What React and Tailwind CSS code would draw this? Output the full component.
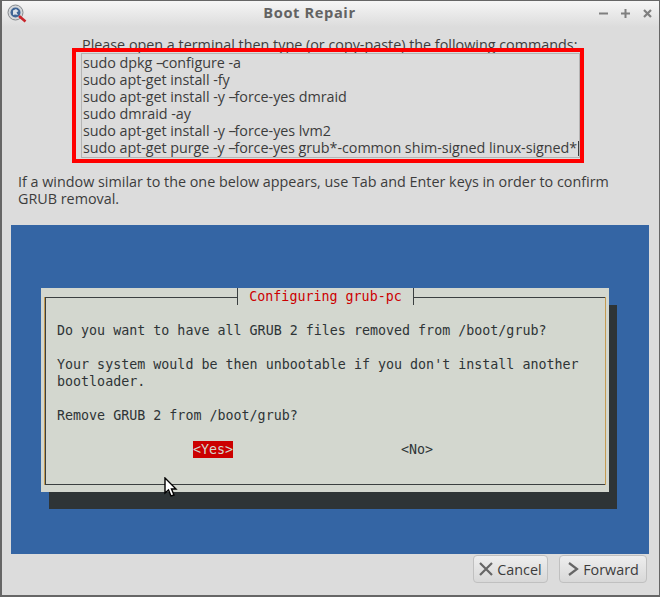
import React from "react";

const sans = "font-['Open_Sans','Noto_Sans',sans-serif]";
const mono = "font-['DejaVu_Sans_Mono',monospace]";

const commands = [
  ["sudo dpkg ", "--", "configure -a"],
  ["sudo apt-get install -fy"],
  ["sudo apt-get install -y ", "--", "force-yes dmraid"],
  ["sudo dmraid -ay"],
  ["sudo apt-get install -y ", "--", "force-yes lvm2"],
  ["sudo apt-get purge -y ", "--", "force-yes grub*-common shim-signed linux-signed*"],
];

function TitleBar() {
  return (
    <div className="h-[26px] shrink-0 flex items-center pl-[5px] pr-[7px] bg-gradient-to-b from-[#f6f6f6] to-[#dcdcdc]">
      <svg width="21" height="21" viewBox="0 0 21 21" className="shrink-0">
        <circle cx="8.5" cy="8.5" r="7.5" fill="#d4d7da" stroke="#85898d" strokeWidth="1" />
        <circle cx="8.5" cy="8.5" r="5" fill="#3f6596" />
        <path d="M6 6.5 L9 5 L11.5 7 L9.5 8.5 L11 11 L8 10.5 L6 11 Z" fill="#d9e0e8" />
        <path d="M12 12 L18.5 17.5" stroke="#c9252b" strokeWidth="2.6" />
      </svg>
      <div className={`flex-1 pr-[8px] pb-[4px] text-center text-[14.67px] font-bold text-[#636363] tracking-[0.6px] ${sans}`}>Boot Repair</div>
      <div className="flex items-center gap-[13px] pb-[2px] text-[#7f7f7f]">
        <svg width="9" height="9" viewBox="0 0 9 9"><path d="M0 4.5H9" stroke="currentColor" strokeWidth="2" /></svg>
        <svg width="9" height="9" viewBox="0 0 9 9"><path d="M0 4.5H9M4.5 0V9" stroke="currentColor" strokeWidth="2" /></svg>
        <svg width="9" height="9" viewBox="0 0 9 9"><path d="M1 1L8 8M8 1L1 8" stroke="currentColor" strokeWidth="2.2" /></svg>
      </div>
    </div>
  );
}

function GrubDialog() {
  return (
    <div className={`relative ml-[30px] mt-[63px] w-[568px] h-[204px] bg-[#d3d7cf] shadow-[8px_17px_0_0_#2e3436] text-[13.33px] leading-[17px] text-[#2e3436] ${mono}`}>
      <div className="absolute left-[3px] right-[3px] top-[9px] bottom-[7px] border-l border-r border-l-[#c49a50] border-r-[#c49a50]">
        <div className="h-full border-t border-l border-b border-t-[#3a3f40] border-b-[#3a3f40] border-l-[#3a3f40]" />
      </div>
      <div className="absolute left-[196px] top-0 h-[17px] w-[177px] bg-[#d3d7cf] border-l border-r border-[#3a3f40] text-center text-[#cc0000]">
        Configuring grub-pc
      </div>
      <div className="relative pt-[34px] pl-[16px] whitespace-pre">
        <div>Do you want to have all GRUB 2 files removed from /boot/grub?</div>
        <div className="mt-[17px]">Your system would be then unbootable if you don't install another</div>
        <div>bootloader.</div>
        <div className="mt-[17px]">Remove GRUB 2 from /boot/grub?</div>
        <div className="mt-[17px] flex">
          <span className="ml-[136px] w-[40px] bg-[#cc0000] text-[#d3d7cf]">&lt;Yes&gt;</span>
          <span className="ml-[168px]">&lt;No&gt;</span>
        </div>
      </div>
    </div>
  );
}

function Btn({ width, icon, label }) {
  return (
    <button className={`${width} h-[28px] flex items-center justify-center gap-[4px] rounded-[4px] border border-[#c0c0c0] bg-gradient-to-b from-[#eeeeee] to-[#d8d8d8] text-[14.35px] text-[#3c3c3c] ${sans}`}>
      {icon}
      {label}
    </button>
  );
}

export default function App() {
  return (
    <div className="relative w-[660px] h-[597px] overflow-hidden flex flex-col bg-[#dcdcdc] border-l-2 border-r border-t border-b-2 border-[#666666] text-[#3c3c3c]">
      <TitleBar />
      <div className={`flex-1 flex flex-col text-[14.35px] leading-[17px] ${sans}`}>
        <div className="pl-[80px] pt-[9px] h-[17px] box-content whitespace-nowrap">Please open a terminal then type (or copy-paste) the following commands:</div>
        <div className="ml-[79px] w-[499px] h-[105px] border border-[#b4b4b4] pl-[1px] whitespace-nowrap tracking-[-0.05px]">
          {commands.map((c, i) => (
            <div key={c.join("")}>
              {c[0]}
              {c[1] && <span className="tracking-[-1.6px]">{c[1]}</span>}
              {c[2]}
              {i === commands.length - 1 && <span className="inline-block w-px h-[15px] ml-[1px] align-[-3px] bg-[#3c3c3c]" />}
            </div>
          ))}
        </div>
        <div className="ml-[16px] w-[620px] mt-[15px] h-[34px]">If a window similar to the one below appears, use Tab and Enter keys in order to confirm GRUB removal.</div>
        <div className="ml-[9px] w-[638px] h-[329px] mt-[18px] shrink-0 bg-[#3465a4] overflow-hidden">
          <GrubDialog />
        </div>
        <div className="flex justify-end gap-[11px] pr-[12px] pt-[1px]">
          <Btn width="w-[75px]" label="Cancel" icon={<svg width="14" height="14" viewBox="0 0 14 14"><path d="M1 1L13 13M13 1L1 13" stroke="#666" strokeWidth="2.2" fill="none" /></svg>} />
          <Btn width="w-[88px]" label="Forward" icon={<svg width="12" height="14" viewBox="0 0 12 14"><path d="M2 1L10 7L2 13" stroke="#666" strokeWidth="2.2" fill="none" /></svg>} />
        </div>
      </div>
      {/* red annotation drawn over the screenshot */}
      <div className="absolute left-[70px] top-[47px] w-[512px] h-[115px] border-[4px] border-[#ff0000]" />
      <svg className="absolute left-[162px] top-[476px]" width="14" height="21" viewBox="0 0 14 21">
        <path d="M1 1V16L4.5 13L7 19L10 18L7.5 12H12Z" fill="#fff" stroke="#000" strokeWidth="1.4" />
      </svg>
    </div>
  );
}
